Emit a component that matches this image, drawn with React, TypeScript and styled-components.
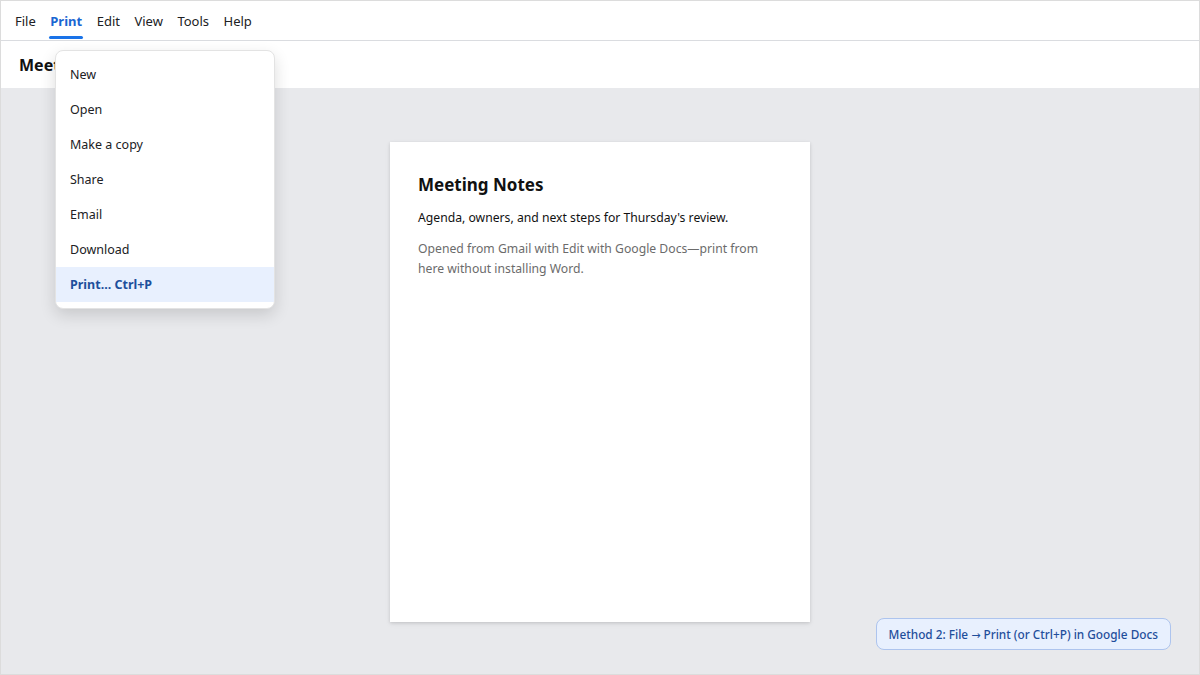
import React from 'react';
import styled, {createGlobalStyle} from 'styled-components';

const GlobalStyle = createGlobalStyle`
  html, body {
    margin: 0;
    padding: 0;
  }
  body {
    font-family: "Noto Sans", "Open Sans", sans-serif;
    color: #1f1f1f;
  }
`;

const Frame = styled.div`
  position: relative;
  display: flex;
  flex-direction: column;
  width: 1200px;
  height: 675px;
  box-sizing: border-box;
  border: 1px solid #dcdcdc;
  background: #e8e9ec;
  overflow: hidden;
`;

const MenuBar = styled.nav`
  display: flex;
  align-items: stretch;
  gap: 14.5px;
  height: 39px;
  padding: 0 0 0 14px;
  background: #fff;
  border-bottom: 1px solid #dadce0;
`;

const MenuItem = styled.div<{$active?: boolean}>`
  position: relative;
  display: flex;
  align-items: center;
  font-size: 13px;
  font-weight: ${({$active}) => ($active ? 700 : 400)};
  color: ${({$active}) => ($active ? '#1a66d2' : '#202124')};

  ${({$active}) =>
    $active &&
    `
    &::after {
      content: '';
      position: absolute;
      left: -1px;
      right: -1px;
      bottom: 1px;
      height: 3px;
      border-radius: 2px;
      background: #1a73e8;
    }
  `}
`;

const TitleBar = styled.div`
  display: flex;
  align-items: center;
  height: 47px;
  padding: 0 18px;
  background: #fff;
  font-size: 16px;
  font-weight: 700;
  color: #111;
`;

const Workspace = styled.main`
  flex: 1;
  display: flex;
  justify-content: center;
  padding-top: 54px;
`;

const Page = styled.article`
  width: 420px;
  height: 480px;
  box-sizing: border-box;
  padding: 32px 28px;
  background: #fff;
  box-shadow: 0 1px 3px rgba(0, 0, 0, 0.12), 0 2px 6px rgba(0, 0, 0, 0.06);
`;

const DocTitle = styled.h1`
  margin: 0 0 12px;
  font-size: 17px;
  line-height: 22px;
  font-weight: 700;
  color: #111;
`;

const DocText = styled.p<{$muted?: boolean}>`
  margin: 0 0 11px;
  font-size: 12.2px;
  line-height: 20px;
  color: ${({$muted}) => ($muted ? '#6b6b6b' : '#111')};
`;

const Dropdown = styled.ul`
  position: absolute;
  top: 49px;
  left: 54px;
  width: 218px;
  margin: 0;
  padding: 6px 0;
  list-style: none;
  background: #fff;
  border: 1px solid #e3e3e3;
  border-radius: 8px;
  box-shadow: 0 6px 16px rgba(0, 0, 0, 0.14);
`;

const DropdownItem = styled.li<{$selected?: boolean}>`
  display: flex;
  align-items: center;
  height: 35px;
  padding: 0 14px;
  font-size: 12.5px;
  font-weight: ${({$selected}) => ($selected ? 700 : 400)};
  color: ${({$selected}) => ($selected ? '#1d4f9c' : '#202124')};
  background: ${({$selected}) => ($selected ? '#e8f0fe' : 'transparent')};
`;

const Hint = styled.div`
  position: absolute;
  right: 28px;
  bottom: 24px;
  padding: 7px 12px;
  font-size: 11.8px;
  font-weight: 500;
  color: #1f4e9b;
  background: #e8f0fe;
  border: 1px solid #adc4ee;
  border-radius: 8px;
`;

const Arrow = styled.span`
  font-family: "DejaVu Sans", sans-serif;
  font-size: 11px;
`;

const menus = ['File', 'Print', 'Edit', 'View', 'Tools', 'Help'];
const fileItems = ['New', 'Open', 'Make a copy', 'Share', 'Email', 'Download'];

const App = () => {
  return (
    <>
      <GlobalStyle />
      <Frame>
        <MenuBar>
          {menus.map((m) => (
            <MenuItem key={m} $active={m === 'Print'}>
              {m}
            </MenuItem>
          ))}
        </MenuBar>
        <TitleBar>Meeting Notes</TitleBar>
        <Workspace>
          <Page>
            <DocTitle>Meeting Notes</DocTitle>
            <DocText>Agenda, owners, and next steps for Thursday's review.</DocText>
            <DocText $muted>
              Opened from Gmail with Edit with Google Docs—print from here without installing Word.
            </DocText>
          </Page>
        </Workspace>
        <Dropdown>
          {fileItems.map((item) => (
            <DropdownItem key={item}>{item}</DropdownItem>
          ))}
          <DropdownItem $selected>Print... Ctrl+P</DropdownItem>
        </Dropdown>
        <Hint>
          Method 2: File <Arrow>→</Arrow> Print (or Ctrl+P) in Google Docs
        </Hint>
      </Frame>
    </>
  );
};

export default App;
